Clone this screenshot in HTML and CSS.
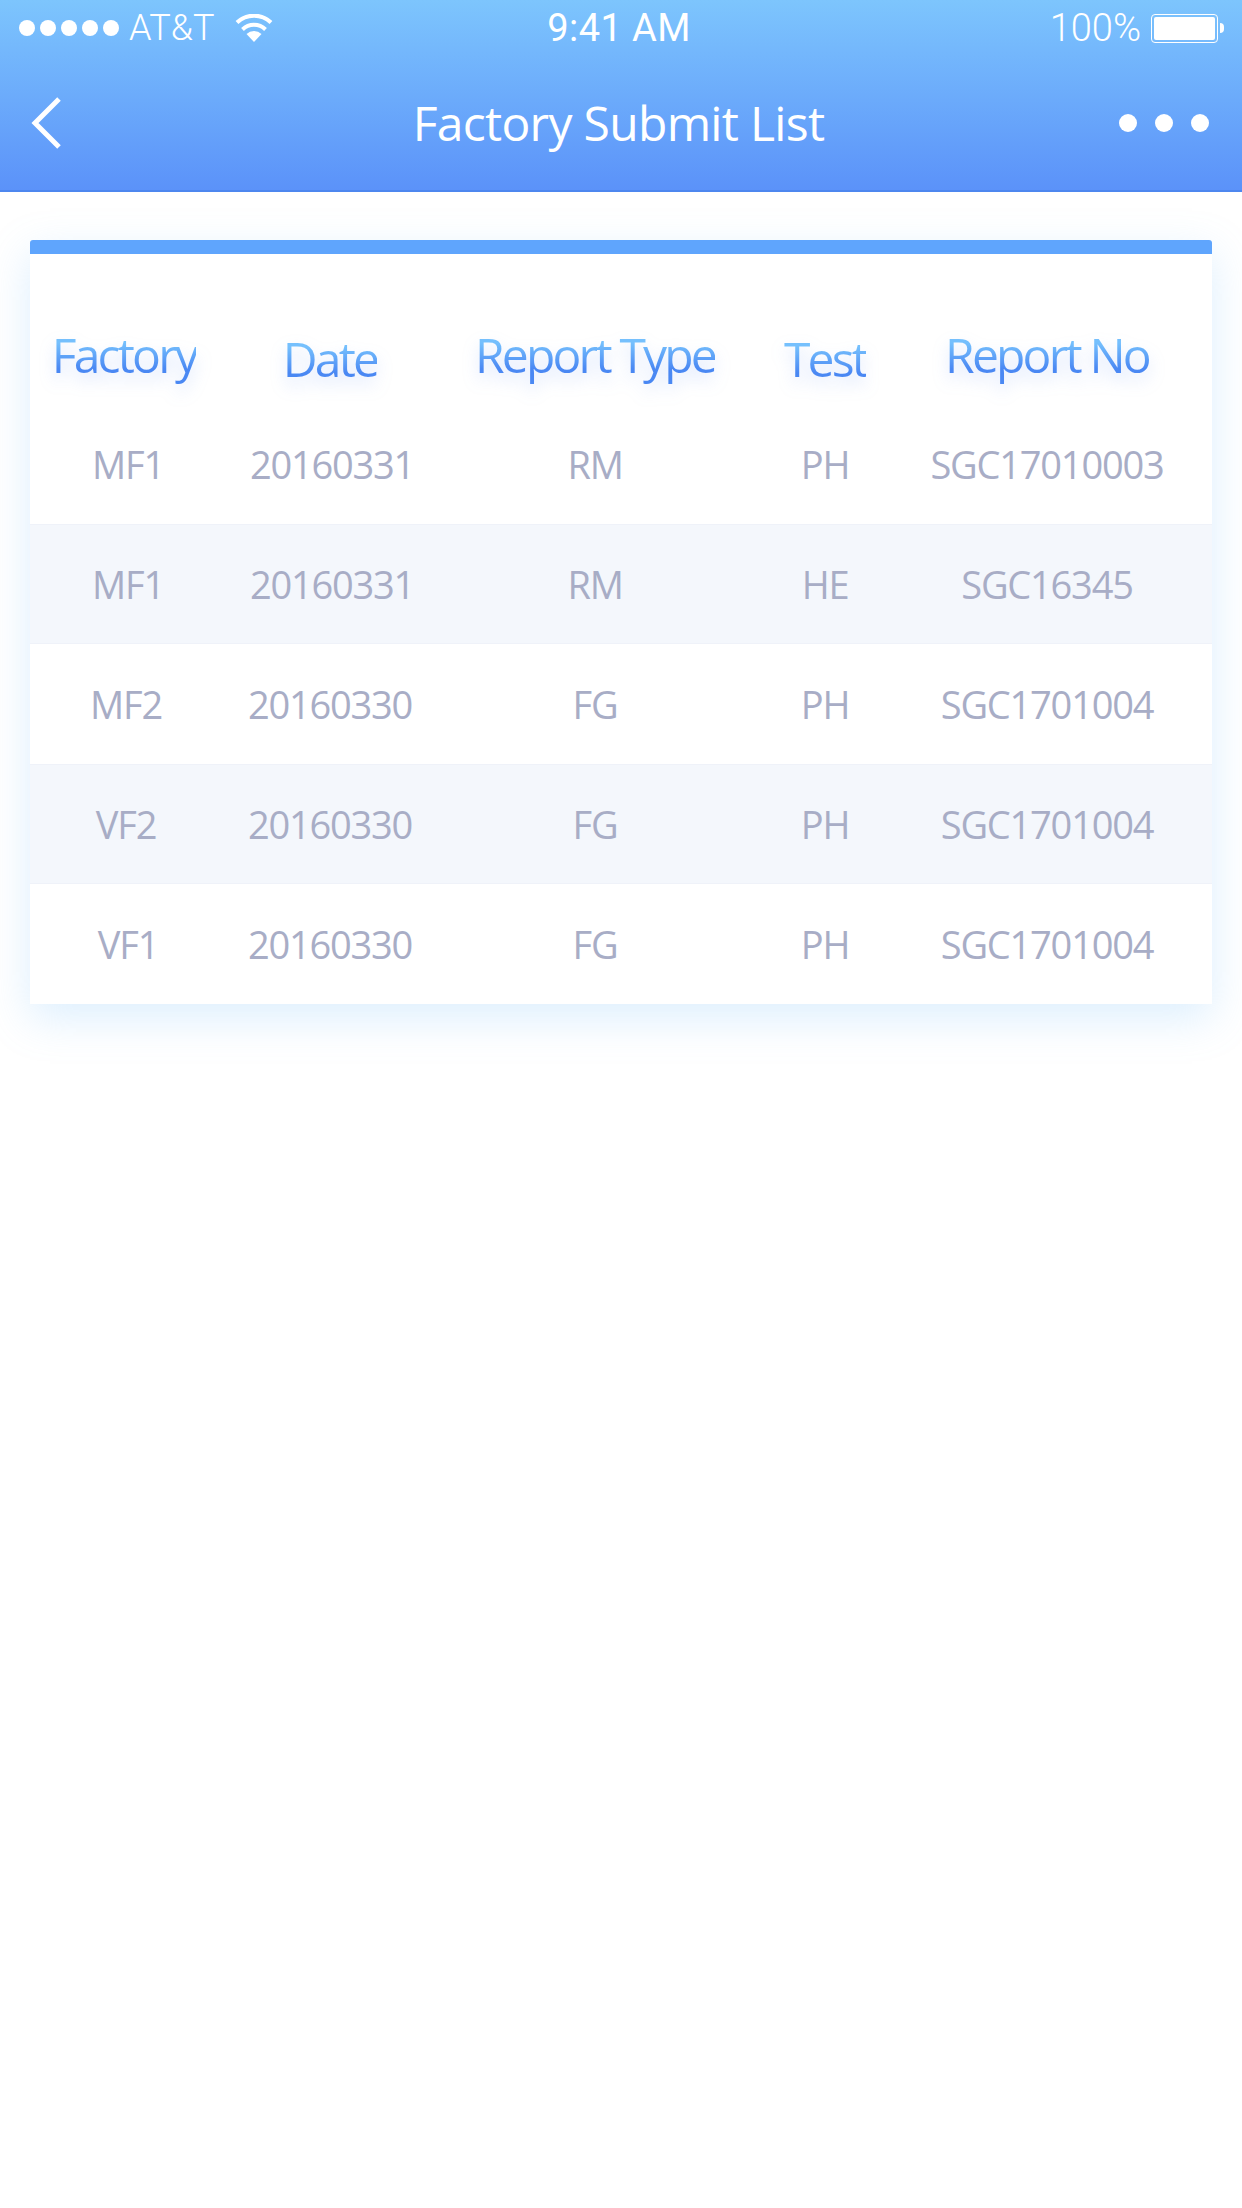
FILE: index.html
```html
<!DOCTYPE html>
<html lang="en">
  <head>
    <meta charset="UTF-8" />
    <title>Factory Submit List</title>
    <link rel="stylesheet" href="styles.css">
  </head>
  <body>
    <!-- header with status bar -->
    <header class="top">
      <div class="status">
        <div class="status-left">
          <div class="signal"><i></i><i></i><i></i><i></i><i></i></div>
          <span class="carrier">AT&amp;T</span>
          <svg class="wifi" width="38" height="28" viewBox="0 0 38 28">
            <path d="M19 28 L11.5 20 A11 11 0 0 1 26.5 20 Z" fill="#fff" />
            <path d="M7.5 15.5 A16.5 16.5 0 0 1 30.5 15.5" fill="none" stroke="#fff" stroke-width="4" />
            <path d="M2 8.5 A24.5 24.5 0 0 1 36 8.5" fill="none" stroke="#fff" stroke-width="4" />
          </svg>
        </div>
        <span class="clock">9:41 AM</span>
        <div class="status-right">
          <span class="percent">100%</span>
          <div class="battery"><div class="battery-fill"></div></div>
          <div class="battery-nub"></div>
        </div>
      </div>
      <nav class="nav">
        <svg class="back" width="34" height="54" viewBox="0 0 34 54">
          <path d="M31 3 L7 27 L31 51" fill="none" stroke="#fff" stroke-width="5" />
        </svg>
        <h1 class="title">Factory Submit List</h1>
        <div class="more"><i></i><i></i><i></i></div>
      </nav>
    </header>

    <!-- list card -->
    <main class="page">
      <section class="card">
        <div class="card-bar"></div>
        <div class="row row-head">
          <div class="cell shift-left"><span class="head-text">Factory</span></div>
          <div class="cell low"><span class="head-text">Date</span></div>
          <div class="cell"><span class="head-text">Report Type</span></div>
          <div class="cell low"><span class="head-text">Test</span></div>
          <div class="cell"><span class="head-text">Report No</span></div>
        </div>
        <div class="row">
          <div class="cell nudge">MF1</div>
          <div class="cell nudge">20160331</div>
          <div class="cell">RM</div>
          <div class="cell">PH</div>
          <div class="cell">SGC17010003</div>
        </div>
        <div class="row alt">
          <div class="cell nudge">MF1</div>
          <div class="cell nudge">20160331</div>
          <div class="cell">RM</div>
          <div class="cell">HE</div>
          <div class="cell">SGC16345</div>
        </div>
        <div class="row">
          <div class="cell">MF2</div>
          <div class="cell">20160330</div>
          <div class="cell">FG</div>
          <div class="cell">PH</div>
          <div class="cell">SGC1701004</div>
        </div>
        <div class="row alt">
          <div class="cell">VF2</div>
          <div class="cell">20160330</div>
          <div class="cell">FG</div>
          <div class="cell">PH</div>
          <div class="cell">SGC1701004</div>
        </div>
        <div class="row">
          <div class="cell nudge">VF1</div>
          <div class="cell">20160330</div>
          <div class="cell">FG</div>
          <div class="cell">PH</div>
          <div class="cell">SGC1701004</div>
        </div>
      </section>
    </main>
  </body>
</html>
```

FILE: styles.css
```css
/* page */
body {
  margin: 0;
  min-height: 2208px;
  background-color: #fff;
  font-family: "Open Sans", "Liberation Sans", sans-serif;
}

/* header */
.top {
  box-sizing: border-box;
  height: 192px;
  background: linear-gradient(180deg, #7dc5fd 0%, #5b92f9 100%);
  border-bottom: 2px solid #4d87ef;
  color: #fff;
}

.status {
  position: relative;
  display: flex;
  justify-content: space-between;
  align-items: center;
  box-sizing: border-box;
  height: 56px;
  padding: 0 18px 0 19px;
  font-family: Roboto, "Liberation Sans", sans-serif;
  font-size: 36px;
  font-weight: 300;
}

.status-left,
.status-right {
  display: flex;
  align-items: center;
}

.signal {
  display: flex;
  gap: 5px;
}

.signal i {
  width: 16px;
  height: 16px;
  border-radius: 50%;
  background-color: #fff;
}

.carrier {
  margin-left: 10px;
}

.wifi {
  margin-left: 21px;
}

.clock {
  position: absolute;
  left: 0;
  right: 4px;
  text-align: center;
  font-size: 38px;
  font-weight: 400;
  letter-spacing: 0.4px;
}

.percent {
  margin-right: 10px;
  font-size: 38px;
}

.battery {
  box-sizing: border-box;
  width: 67px;
  height: 29px;
  padding: 2px;
  border: 1px solid #fff;
  border-radius: 4px;
}

.battery-fill {
  height: 100%;
  background-color: #fff;
  border-radius: 2px;
}

.battery-nub {
  width: 4px;
  height: 10px;
  margin-left: 2px;
  background-color: #fff;
  border-radius: 0 5px 5px 0;
}

.nav {
  display: grid;
  grid-template-columns: 1fr auto 1fr;
  align-items: center;
  height: 134px;
  padding: 0 33px 0 28px;
}

.title {
  margin: 0 0 2px;
  font-size: 48px;
  font-weight: 400;
  letter-spacing: -0.7px;
}

.more {
  display: flex;
  justify-content: flex-end;
  gap: 18px;
}

.more i {
  width: 18px;
  height: 18px;
  border-radius: 50%;
  background-color: #fff;
}

/* card */
.page {
  padding: 48px 30px 0;
}

.card {
  background-color: #fff;
  box-shadow: 0 14px 40px rgba(120, 190, 250, 0.25);
}

.card-bar {
  height: 14px;
  background-color: #5fa5fd;
  border-radius: 3px 3px 0 0;
}

.row {
  display: grid;
  grid-template-columns: 192px 216px 314px 146px 298px;
  height: 120px;
  align-items: center;
  padding-right: 16px;
  font-size: 38px;
  color: #a8adc6;
}

.row.alt {
  background-color: #f4f7fc;
  box-shadow: inset 0 -1px 0 #eff2f9, inset 0 1px 0 #eff2f9;
}

.cell {
  text-align: center;
  letter-spacing: -1.2px;
}

.cell.nudge {
  padding-left: 4px;
}

/* column titles */
.row-head {
  height: 150px;
  align-items: start;
  font-size: 48px;
}

.row-head .cell {
  padding-top: 68px;
}

.row-head .cell.low {
  padding-top: 72px;
}

.row-head .cell.shift-left {
  padding-right: 4px;
}

.head-text {
  background: linear-gradient(180deg, #75c0fd 32%, #4a88f3 72%);
  -webkit-background-clip: text;
  background-clip: text;
  color: transparent;
  filter: drop-shadow(0 8px 8px rgba(90, 140, 245, 0.25));
  letter-spacing: -2.8px;
}
```
